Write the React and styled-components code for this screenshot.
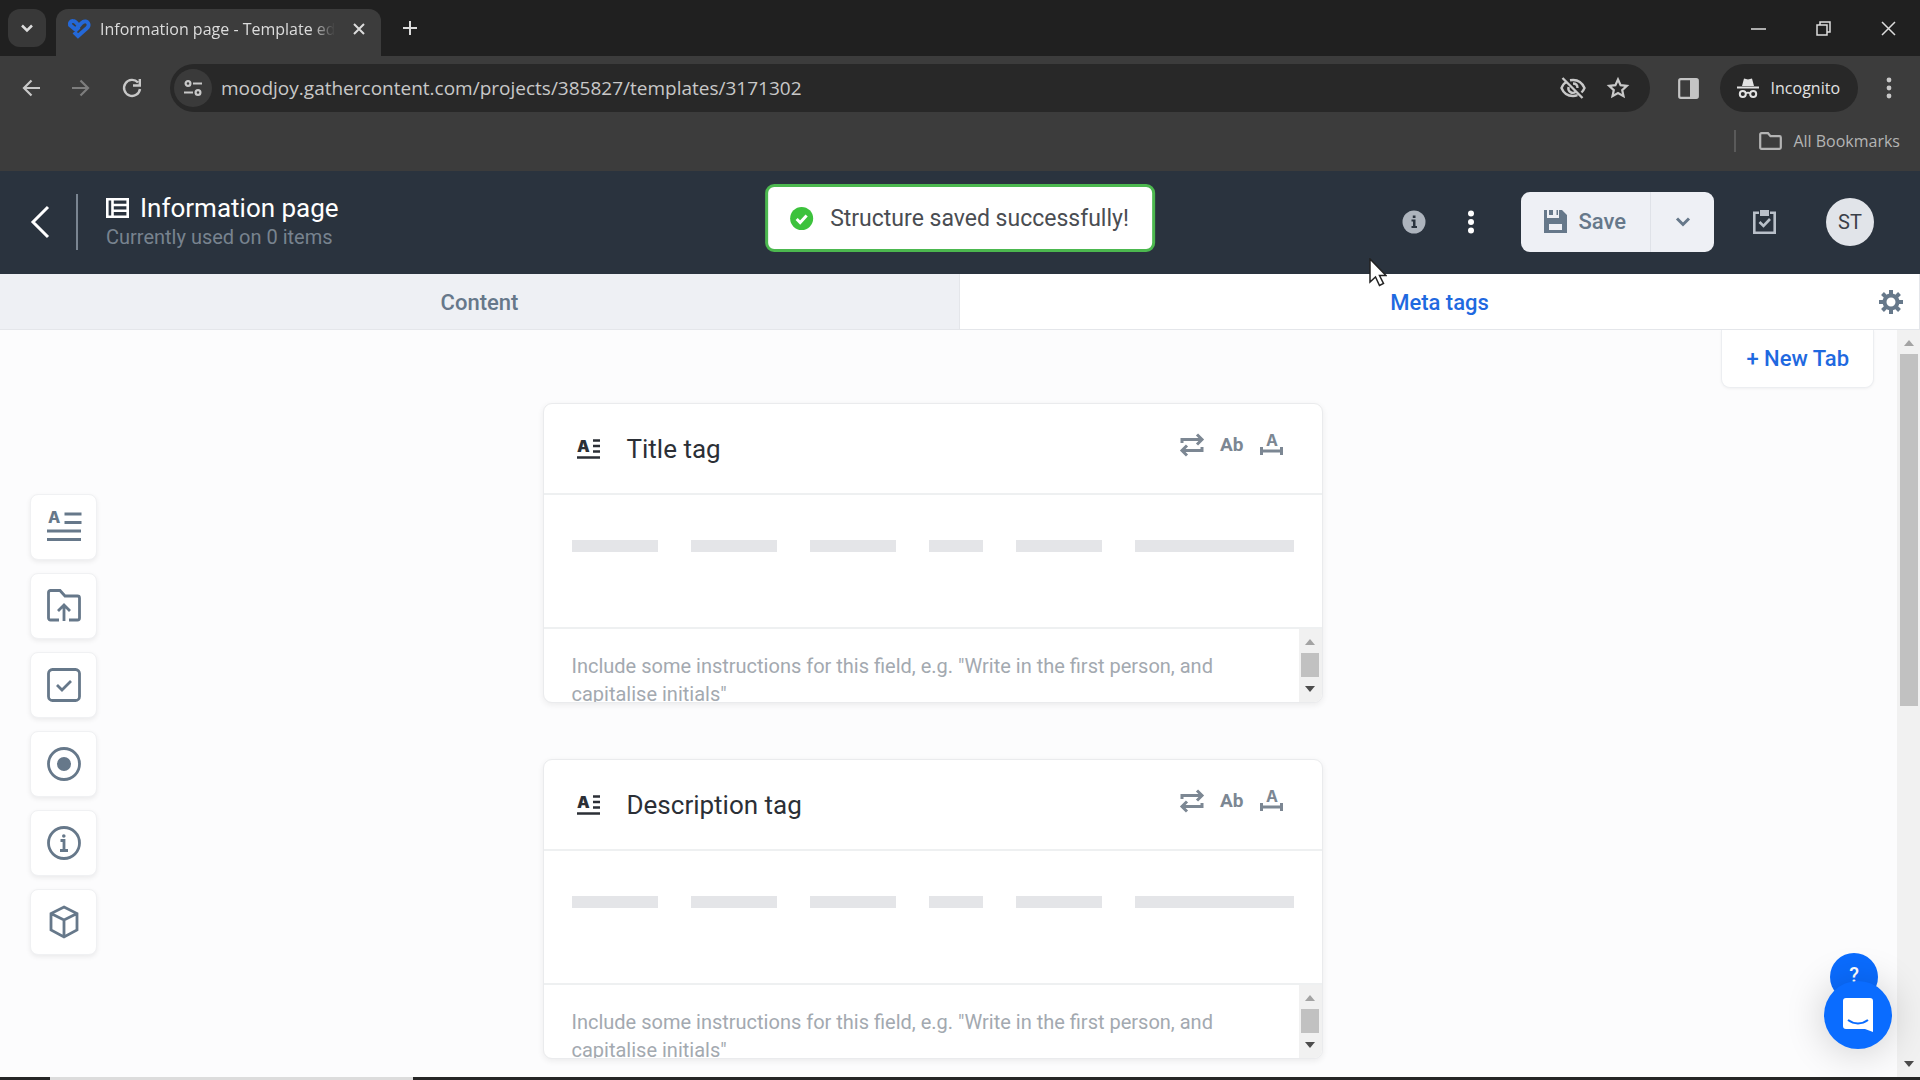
import React, { useState } from 'react';
import styled, { createGlobalStyle, css } from 'styled-components';

const tools = [
  {
    name: 'Text field',
    art: (
      <>
        <text x="1" y="13" fontFamily="Inter" fontSize="16" fontWeight="800" fill="currentColor" stroke="none">A</text>
        <path d="M17.500 4h17M17.500 12.500h17M0 21h34M0 29.500h34" />
      </>
    ),
  },
  {
    name: 'Attachment field',
    art: (
      <>
        <path d="M12 31H3.500a2 2 0 0 1-2-2V3.500a2 2 0 0 1 2-2H13l5 5.500h12.500a2 2 0 0 1 2 2v20a2 2 0 0 1-2 2H22" />
        <path d="M17 32V16M11 22l6-6 6 6" />
      </>
    ),
  },
  {
    name: 'Checkbox field',
    art: (
      <>
        <rect x="1.500" y="1.500" width="31" height="31" rx="4" />
        <path d="M10 17l5 5 9-9" />
      </>
    ),
  },
  {
    name: 'Multiple choice field',
    art: (
      <>
        <circle cx="17" cy="17" r="15.500" />
        <circle cx="17" cy="17" r="7" fill="currentColor" stroke="none" />
      </>
    ),
  },
  {
    name: 'Guidelines',
    art: (
      <>
        <circle cx="17" cy="17" r="15.500" />
        <path d="M13.500 14.500h3.500v10M13 24.500h8" />
        <circle cx="16.800" cy="10" r="1.800" fill="currentColor" stroke="none" />
      </>
    ),
  },
  {
    name: 'Component',
    art: <path d="M17 2L30 8.500V25L17 32 4 25V8.500zM4 8.500l13 6.500 13-6.500M17 15v17" />,
  },
];

const fields = [
  { id: 'title', label: 'Title tag' },
  { id: 'description', label: 'Description tag' },
];

const lines = [86, 86, 86, 53, 86, 158];


const ScrollRail = ({ size }) => (
  <Rail>
    <Arrow viewBox="0 0 10 6" $color="#a3a3a3"><path d="M0 6L5 0l5 6z" /></Arrow>
    <Track>
      <Thumb $size={size} />
    </Track>
    <Arrow viewBox="0 0 10 6" $color="#4c4c4c"><path d="M0 0l5 6 5-6z" /></Arrow>
  </Rail>
);

const Field = ({ id, label }) => {
  const [value, setValue] = useState('');

  return (
    <Card>
      <CardHead>
        <Icon viewBox="0 0 23 20" $w={23} $h={20} $line={2.500}>
          <text x="0" y="13" fontFamily="Inter" fontSize="16" fontWeight="900" fill="currentColor" stroke="none">A</text>
          <path d="M16 1.500h7M16 7h7M16 12.500h7M0 18.500h23" />
        </Icon>
        <CardTitle>{label}</CardTitle>
        <Options>
          <PlainButton aria-label="Repeatable">
            <Icon viewBox="0 0 24 24" $w={24} $h={24} $line={3}>
              <path d="M2 10V6.500h19M17 1.500l5 5-5 5M22 14v3.500H3M7 12.500l-5 5 5 5" />
            </Icon>
          </PlainButton>
          <AbButton>Ab</AbButton>
          <PlainButton aria-label="Length limit">
            <Icon viewBox="0 0 23 24" $w={23} $h={24} $line={3}>
              <text x="6" y="13" fontFamily="Inter" fontSize="16" fontWeight="700" fill="currentColor" stroke="none">A</text>
              <path d="M1.500 14v8M21.500 14v8M1.500 18h20" />
            </Icon>
          </PlainButton>
        </Options>
      </CardHead>
      <CardBody>
        {lines.map((line, i) => (
          <Line key={i} $span={line} />
        ))}
      </CardBody>
      <CardFoot>
        <Instructions
          id={id}
          aria-label={`${label} instructions`}
          value={value}
          onChange={(e) => {
            setValue(e.target.value);
          }}
          placeholder={'Include some instructions for this field, e.g. "Write in the first person, and capitalise initials"'}
        />
        <ScrollRail size={24} />
      </CardFoot>
    </Card>
  );
};

const Browser = () => (
  <>
    <TabStrip>
      <TabSearch aria-label="Search tabs">
        <Icon viewBox="0 0 12 8" $w={12} $h={8} $line={2.500}><path d="M1 1.500l5 5 5-5" /></Icon>
      </TabSearch>
      <BrowserTab>
        <Icon viewBox="0 0 24 20" $w={24} $h={20} $line={4} $color="#2468d8">
          <path d="M13 8l-3 3-6-5a3 3 0 0 1 3-4c3 0 4 3 6 5M8 13l4 4 9-8a3.500 3.500 0 0 0-4-6c-2 1-4 4-7 7" />
        </Icon>
        <BrowserTabTitle>Information page - Template editor</BrowserTabTitle>
        <PlainButton aria-label="Close tab">
          <Icon viewBox="0 0 12 12" $w={12} $h={12} $line={2}><path d="M1 1l10 10M11 1L1 11" /></Icon>
        </PlainButton>
      </BrowserTab>
      <NewBrowserTab aria-label="New tab">
        <Icon viewBox="0 0 16 16" $w={16} $h={16} $line={2}><path d="M8 1v14M1 8h14" /></Icon>
      </NewBrowserTab>
      <WindowControls>
        <PlainButton aria-label="Minimize">
          <Icon viewBox="0 0 15 15" $w={15} $h={15} $line={1.500}><path d="M0 8h15" /></Icon>
        </PlainButton>
        <PlainButton aria-label="Restore">
          <Icon viewBox="0 0 15 15" $w={15} $h={15} $line={1.500}>
            <path d="M1 4h10v10H1zM4 4V1h10v10h-3" />
          </Icon>
        </PlainButton>
        <PlainButton aria-label="Close">
          <Icon viewBox="0 0 15 15" $w={15} $h={15} $line={1.500}><path d="M1 1l13 13M14 1L1 14" /></Icon>
        </PlainButton>
      </WindowControls>
    </TabStrip>

    <Toolbar>
      <NavButtons>
        <PlainButton aria-label="Back">
          <Icon viewBox="0 0 18 18" $w={18} $h={18} $line={2.200}><path d="M18 9H2M9.500 1.500L2 9l7.500 7.500" /></Icon>
        </PlainButton>
        <PlainButton aria-label="Forward">
          <Icon viewBox="0 0 18 18" $w={18} $h={18} $line={2.200} $color="#7d7d7d">
            <path d="M0 9h16M8.500 1.500L16 9l-7.500 7.500" />
          </Icon>
        </PlainButton>
        <PlainButton aria-label="Reload">
          <Icon viewBox="0 0 20 20" $w={20} $h={20} $line={2.400}>
            <path d="M16 4.500A8 8 0 1 0 18 11M17.800 1v6.500H11" />
          </Icon>
        </PlainButton>
      </NavButtons>
      <AddressBar>
        <SiteInfo aria-label="Site information">
          <Icon viewBox="0 0 18 16" $w={18} $h={16} $line={2.200}>
            <circle cx="4" cy="3.500" r="2.400" />
            <path d="M9 3.500h9M0 12.500h9" />
            <circle cx="14" cy="12.500" r="2.400" />
          </Icon>
        </SiteInfo>
        <Address aria-label="Address" defaultValue="moodjoy.gathercontent.com/projects/385827/templates/3171302" />
        <PlainButton aria-label="Third-party cookies blocked">
          <Icon viewBox="0 0 26 22" $w={26} $h={22} $line={2.400}>
            <path d="M7 4.500C4 6 2.500 8.500 1.500 11c2 5 6.500 8 11.500 8 1.600 0 3-.3 4.500-.8M10 3.300c7-1.300 12 2.200 14.500 7.700-.7 1.700-1.700 3.200-3 4.500M8.500 10c-1 5 4 7 7 5M13 6.500c3 0 4.500 2 4.500 4.500M2.500 1l20 20" />
          </Icon>
        </PlainButton>
        <PlainButton aria-label="Bookmark this page">
          <Icon viewBox="0 0 22 22" $w={22} $h={22} $line={2.200}>
            <path d="M11 2.500l2.600 5.700 6.200.7-4.600 4.200 1.300 6.100L11 16.100l-5.500 3.100 1.300-6.100-4.600-4.200 6.200-.7z" />
          </Icon>
        </PlainButton>
      </AddressBar>
      <PlainButton aria-label="Side panel">
        <Icon viewBox="0 0 21 21" $w={21} $h={21} $line={2.200} $color="#c4c4c4">
          <rect x="1.200" y="1.200" width="18.600" height="18.600" rx="1.500" />
          <path d="M12 1h8v19h-8z" fill="currentColor" stroke="none" />
        </Icon>
      </PlainButton>
      <Incognito>
        <Icon viewBox="0 0 22 20" $w={22} $h={20} $line={2}>
          <path d="M5 8l2-7.500 4 1 4-1L17 8z" fill="currentColor" stroke="none" />
          <path d="M0 9.500h22M9 15.500c1-1 3-1 4 0" />
          <circle cx="5.800" cy="16" r="3" />
          <circle cx="16.200" cy="16" r="3" />
        </Icon>
        Incognito
      </Incognito>
      <PlainButton aria-label="Browser menu">
        <Icon viewBox="0 0 6 22" $w={6} $h={22} $fill>
          <circle cx="3" cy="3" r="2.400" />
          <circle cx="3" cy="11" r="2.400" />
          <circle cx="3" cy="19" r="2.400" />
        </Icon>
      </PlainButton>
    </Toolbar>

    <BookmarkBar>
      <BookmarkRule />
      <BookmarkButton>
        <Icon viewBox="0 0 23 18" $w={23} $h={18} $line={2.200}>
          <path d="M1.200 2.500q0-1.300 1.300-1.300H9l2.500 3h9q1.300 0 1.300 1.300v10q0 1.300-1.300 1.300h-18q-1.300 0-1.300-1.300z" />
        </Icon>
        All Bookmarks
      </BookmarkButton>
    </BookmarkBar>
  </>
);

const App = () => {
  const [tab, setTab] = useState('Meta tags');

  return (
    <Page>
      <GlobalStyle />
      <Browser />

      <Header>
        <PlainButton aria-label="Back to templates">
          <Icon viewBox="0 0 18 34" $w={18} $h={34} $line={3}><path d="M17 2L2 17l15 15" /></Icon>
        </PlainButton>
        <HeaderRule />
        <Heading>
          <TitleRow>
            <Icon viewBox="0 0 23 20" $w={23} $h={20} $line={2.600}>
              <path d="M1.300 1.300h20.400v17.400H1.300zM6.500 1v18M6.500 7h15M6.500 12.800h15" />
            </Icon>
            <Title>Information page</Title>
          </TitleRow>
          <Subtitle>Currently used on 0 items</Subtitle>
        </Heading>
        <HeaderIcons>
          <PlainButton aria-label="Template info">
            <Icon viewBox="0 0 24 24" $w={24} $h={24} $fill $color="#adb4bd">
              <circle cx="12" cy="12" r="11.500" />
              <path d="M9.500 9.500h4V16H15v2H9.500v-2H11v-4.500H9.500zM10.800 5.500h2.700V8h-2.700z" fill="#2a333e" />
            </Icon>
          </PlainButton>
          <PlainButton aria-label="More options">
            <Icon viewBox="0 0 8 24" $w={8} $h={24} $fill>
              <circle cx="4" cy="3.500" r="3" />
              <circle cx="4" cy="12" r="3" />
              <circle cx="4" cy="20.500" r="3" />
            </Icon>
          </PlainButton>
        </HeaderIcons>
        <SaveGroup>
          <SaveButton>
            <Icon viewBox="0 0 23 23" $w={23} $h={23} $fill>
              <path d="M0 0h3v8h12V0h3l5 5v18H0zM5 14v6h13v-6z" fillRule="evenodd" />
              <path d="M5 0h4v5H5zM12.500 0H14v5h-1.500z" />
            </Icon>
            Save
          </SaveButton>
          <SaveMore aria-label="More save options">
            <Icon viewBox="0 0 14 9" $w={14} $h={9} $line={3}><path d="M1 1.500l6 6 6-6" /></Icon>
          </SaveMore>
        </SaveGroup>
        <Tasks aria-label="Tasks">
          <Icon viewBox="0 0 23 24" $w={23} $h={24} $line={2.600} $color="#b9c0c9">
            <path d="M6 2.800H1.300v19.900h20.400V2.800H17M6.500 12l4 4 6.500-7" />
            <path d="M7 0h9v6H7z" fill="currentColor" stroke="none" />
          </Icon>
        </Tasks>
        <Avatar>ST</Avatar>
        <Toast role="status">
          <Icon viewBox="0 0 23 23" $w={23} $h={23} $line={3} $color="#3cc23c">
            <circle cx="11.500" cy="11.500" r="11.500" fill="currentColor" stroke="none" />
            <path d="M6.500 12l3.500 3.500 6.500-7" stroke="#fff" />
          </Icon>
          Structure saved successfully!
        </Toast>
      </Header>

      <Tabs>
        {['Content', 'Meta tags'].map((name) => (
          <Tab
            key={name}
            $active={tab === name}
            onClick={() => {
              setTab(name);
            }}
          >
            {name}
          </Tab>
        ))}
        <Settings aria-label="Tab settings">
          <Icon viewBox="0 0 24 24" $w={24} $h={24} $line={4}>
            <circle cx="12" cy="12" r="6.500" />
            <path d="M12 0v5M12 19v5M0 12h5M19 12h5M3.500 3.500L7 7M17 17l3.500 3.500M3.500 20.500L7 17M17 7l3.500-3.500" />
          </Icon>
        </Settings>
      </Tabs>

      <Workspace>
        <Canvas>
          <Sidebar>
            {tools.map((tool) => (
              <Tool key={tool.name} aria-label={tool.name}>
                <Icon viewBox="0 0 34 34" $w={34} $h={34} $line={2.800}>{tool.art}</Icon>
              </Tool>
            ))}
          </Sidebar>
          <Fields>
            {fields.map((field) => (
              <Field key={field.id} id={field.id} label={field.label} />
            ))}
          </Fields>
          <Side>
            <NewTab>+ New Tab</NewTab>
          </Side>
        </Canvas>
        <ScrollRail size={352} />
      </Workspace>

      <Taskbar>
        <TaskItem />
      </Taskbar>

      <Help aria-label="Help">?</Help>
      <Chat aria-label="Open chat">
        <Icon viewBox="0 0 30 34" $w={30} $h={34} $line={2}>
          <path d="M3 0h24a3 3 0 0 1 3 3v31l-8-3H3a3 3 0 0 1-3-3V3a3 3 0 0 1 3-3z" fill="#fff" stroke="none" />
          <path d="M5 22c6 4.500 14 4.500 20 0" stroke="#0a6cff" />
        </Icon>
      </Chat>
      <Pointer viewBox="0 0 18 29">
        <path d="M1 1v23l5.500-5 4 8.500 4-2-4-8H17z" fill="#fff" stroke="#222" strokeWidth="1.500" />
      </Pointer>
    </Page>
  );
};

export default App;


const GlobalStyle = createGlobalStyle`
* {
    box-sizing: border-box;
}
body {
    margin: 0;
    font-family: Roboto, sans-serif;
}
button, input, textarea {
    font: inherit;
    color: inherit;
}
`;

const chromeFont = css`
font-family: "Open Sans", sans-serif;
`;

const Page = styled.div`
position: relative;
width: 100%;
height: 100vh;
display: flex;
flex-direction: column;
overflow: hidden;
background: #fcfcfd;
`;

const Icon = styled.svg`
width: ${(p) => p.$w}px;
height: ${(p) => p.$h}px;
display: block;
flex: none;
overflow: visible;
color: ${(p) => p.$color || 'inherit'};
fill: ${(p) => (p.$fill ? 'currentColor' : 'none')};
stroke: ${(p) => (p.$fill ? 'none' : 'currentColor')};
stroke-width: ${(p) => p.$line || 0};
`;

const PlainButton = styled.button`
display: flex;
align-items: center;
justify-content: center;
padding: 0;
border: none;
background: none;
cursor: pointer;
`;

/* browser frame */
const TabStrip = styled.div`
${chromeFont}
flex: none;
height: 56px;
display: flex;
align-items: center;
padding-left: 8px;
background: #202020;
color: #dcdcdc;
`;
const TabSearch = styled(PlainButton)`
width: 38px;
height: 38px;
border-radius: 12px;
background: #383838;
`;
const BrowserTab = styled.div`
align-self: flex-end;
width: 325px;
height: 47px;
margin-left: 10px;
padding: 0 16px 8px 10px;
display: flex;
align-items: center;
gap: 10px;
border-radius: 12px 12px 0 0;
background: #3c3c3c;
`;
const BrowserTabTitle = styled.span`
flex: 1;
margin-right: 8px;
overflow: hidden;
white-space: nowrap;
font-size: 16px;
line-height: 24px;
mask-image: linear-gradient(90deg, #000 90%, transparent);
`;
const NewBrowserTab = styled(PlainButton)`
margin-left: 21px;
`;
const WindowControls = styled.div`
margin-left: auto;
padding-right: 24px;
display: flex;
gap: 50px;
`;
const Toolbar = styled.div`
${chromeFont}
flex: none;
display: flex;
align-items: center;
padding: 8px 28px 0 22px;
background: #3c3c3c;
color: #c8c8c8;
`;
const NavButtons = styled.div`
display: flex;
gap: 32px;
margin-right: 28px;
`;
const AddressBar = styled.div`
flex: 1;
height: 48px;
display: flex;
align-items: center;
gap: 21px;
margin-right: 28px;
padding: 0 21px 0 4px;
border-radius: 24px;
background: #282828;
`;
const SiteInfo = styled(PlainButton)`
width: 38px;
height: 38px;
border-radius: 50%;
background: #3a3a3a;
`;
const Address = styled.input`
flex: 1;
min-width: 0;
margin-left: -12px;
padding: 0;
border: none;
outline: none;
background: none;
font-size: 19px;
line-height: 28px;
`;
const Incognito = styled(PlainButton)`
height: 48px;
margin: 0 28px 0 21px;
padding: 0 18px 0 17px;
gap: 12px;
border-radius: 24px;
background: #282828;
color: #e2e2e2;
font-size: 16px;
`;
const BookmarkBar = styled.div`
${chromeFont}
flex: none;
height: 59px;
display: flex;
align-items: center;
justify-content: flex-end;
gap: 23px;
padding: 0 20px 2px 0;
background: #3c3c3c;
color: #b4b4b4;
`;
const BookmarkRule = styled.div`
width: 2px;
height: 22px;
background: #5a5a5a;
`;
const BookmarkButton = styled(PlainButton)`
gap: 11px;
font-size: 16px;
`;

/* application header */
const Header = styled.header`
position: relative;
flex: none;
height: 103px;
display: flex;
align-items: center;
padding: 0 46px 2px 31px;
background: #2a333e;
color: #fff;
`;
const HeaderRule = styled.div`
width: 2px;
height: 56px;
margin: 0 28px 0 27px;
background: #7a8591;
`;
const Heading = styled.div`
flex: 1;
`;
const TitleRow = styled.div`
display: flex;
align-items: center;
gap: 11px;
`;
const Title = styled.h1`
margin: 0;
font-size: 26px;
font-weight: 400;
line-height: 30px;
`;
const Subtitle = styled.p`
margin: 0;
color: #78838f;
font-size: 20px;
line-height: 28px;
`;
const HeaderIcons = styled.div`
display: flex;
gap: 41px;
margin-right: 46px;
`;
const SaveGroup = styled.div`
display: flex;
overflow: hidden;
border-radius: 9px;
background: #eef0f5;
color: #66788a;
`;
const SaveButton = styled(PlainButton)`
height: 60px;
padding: 0 24px 0 23px;
gap: 11px;
border-right: 1px solid #dfe2e8;
font-size: 22px;
font-weight: 500;
`;
const SaveMore = styled(PlainButton)`
width: 63px;
`;
const Tasks = styled(PlainButton)`
margin: 0 50px 0 39px;
`;
const Avatar = styled(PlainButton)`
width: 48px;
height: 48px;
border-radius: 50%;
background: #e1e4e9;
color: #3a4048;
font-size: 20px;
`;
const Toast = styled.div`
position: absolute;
top: 13px;
left: 50%;
transform: translateX(-50%);
height: 68px;
padding: 0 23px 0 22px;
display: flex;
align-items: center;
gap: 17px;
border: 3px solid #4cb84f;
border-radius: 9px;
background: #fff;
color: #4a4d52;
font-size: 23px;
white-space: nowrap;
`;

/* tabs */
const Tabs = styled.nav`
position: relative;
flex: none;
height: 56px;
display: flex;
border-bottom: 1px solid #e4e6ea;
`;
const Tab = styled.button`
flex: 1;
padding: 2px 0 0;
border: none;
border-right: 1px solid #e4e6ea;
background: ${(p) => (p.$active ? '#fff' : '#eef0f4')};
color: ${(p) => (p.$active ? '#1f69e0' : '#66788a')};
font-size: 22px;
font-weight: 500;
cursor: pointer;
`;
const Settings = styled(PlainButton)`
position: absolute;
right: 17px;
top: 16px;
color: #66788a;
`;

/* workspace */
const Workspace = styled.div`
flex: 1;
min-height: 0;
display: flex;
`;
const Canvas = styled.main`
flex: 1;
min-width: 0;
display: grid;
grid-template-columns: minmax(0, 1fr) minmax(0, 780px) minmax(0, 1fr);
padding-right: 32px;
overflow: hidden;
`;
const Sidebar = styled.aside`
display: flex;
flex-direction: column;
gap: 13px;
padding: 164px 0 0 30px;
`;
const Tool = styled(PlainButton)`
width: 67px;
height: 66px;
flex: none;
border: 1px solid #f0f1f3;
border-radius: 8px;
background: #fff;
box-shadow: 0 2px 5px rgba(0, 0, 0, 0.07);
color: #66788a;
`;
const Fields = styled.section`
display: flex;
flex-direction: column;
gap: 56px;
padding-top: 73px;
`;
const Side = styled.div`
display: flex;
justify-content: flex-end;
align-items: flex-start;
margin-right: -9px;
`;
const NewTab = styled.button`
height: 58px;
padding: 0 24px;
border: 1px solid #eceef1;
border-top: none;
border-radius: 0 0 9px 9px;
background: #fff;
color: #1f69e0;
font-size: 22px;
font-weight: 500;
box-shadow: 0 1px 3px rgba(0, 0, 0, 0.05);
cursor: pointer;
`;

const Card = styled.article`
border: 1px solid #eaebed;
border-radius: 9px;
overflow: hidden;
background: #fff;
box-shadow: 0 2px 6px rgba(0, 0, 0, 0.07);
`;
const CardHead = styled.div`
height: 91px;
display: flex;
align-items: center;
padding: 0 39px 0 33px;
gap: 27px;
border-bottom: 2px solid #eef0f1;
color: #2b2f36;
`;
const CardTitle = styled.h2`
flex: 1;
margin: 0;
font-size: 26px;
font-weight: 400;
`;
const Options = styled.div`
display: flex;
align-items: center;
gap: 16px;
padding-bottom: 8px;
color: #7c8793;
`;
const AbButton = styled(PlainButton)`
font-size: 19px;
font-weight: 700;
`;
const CardBody = styled.div`
height: 134px;
display: flex;
gap: 33px;
padding: 45px 28px 0;
border-bottom: 2px solid #eef0f1;
`;
const Line = styled.div`
flex: ${(p) => p.$span} 1 0;
height: 12px;
background: #e4e5e8;
`;
const CardFoot = styled.div`
height: 73px;
display: flex;
`;
const Instructions = styled.textarea`
flex: 1;
min-width: 0;
padding: 23px 28px 0;
border: none;
outline: none;
resize: none;
overflow: hidden;
background: none;
font-size: 20px;
line-height: 28px;

&::placeholder {
    color: #a3a9b0;
    opacity: 1;
}
`;

const Rail = styled.div`
width: 23px;
flex: none;
display: flex;
flex-direction: column;
align-items: center;
gap: 8px;
padding: 10px 0;
background: #f1f1f1;
`;
const Arrow = styled.svg`
width: 10px;
height: 6px;
flex: none;
fill: ${(p) => p.$color};
`;
const Track = styled.div`
flex: 1;
min-height: 0;
`;
const Thumb = styled.div`
width: 18px;
height: ${(p) => p.$size}px;
background: #c1c1c1;
`;

const Taskbar = styled.footer`
flex: none;
height: 3px;
padding-left: 50px;
background: #262626;
`;
const TaskItem = styled.div`
width: 363px;
height: 3px;
background: #dcdcdc;
`;

/* floating bits */
const Help = styled(PlainButton)`
position: absolute;
right: 42px;
bottom: 79px;
width: 48px;
height: 48px;
padding-bottom: 4px;
border-radius: 50%;
background: #0a6cff;
color: #fff;
font-size: 20px;
font-weight: 500;
`;
const Chat = styled(PlainButton)`
position: absolute;
right: 28px;
bottom: 31px;
width: 68px;
height: 68px;
border-radius: 50%;
background: #0a6cff;
box-shadow: 0 2px 40px rgba(0, 0, 0, 0.2);
`;
const Pointer = styled.svg`
position: absolute;
left: 1369px;
top: 258px;
width: 18px;
height: 29px;
`;
